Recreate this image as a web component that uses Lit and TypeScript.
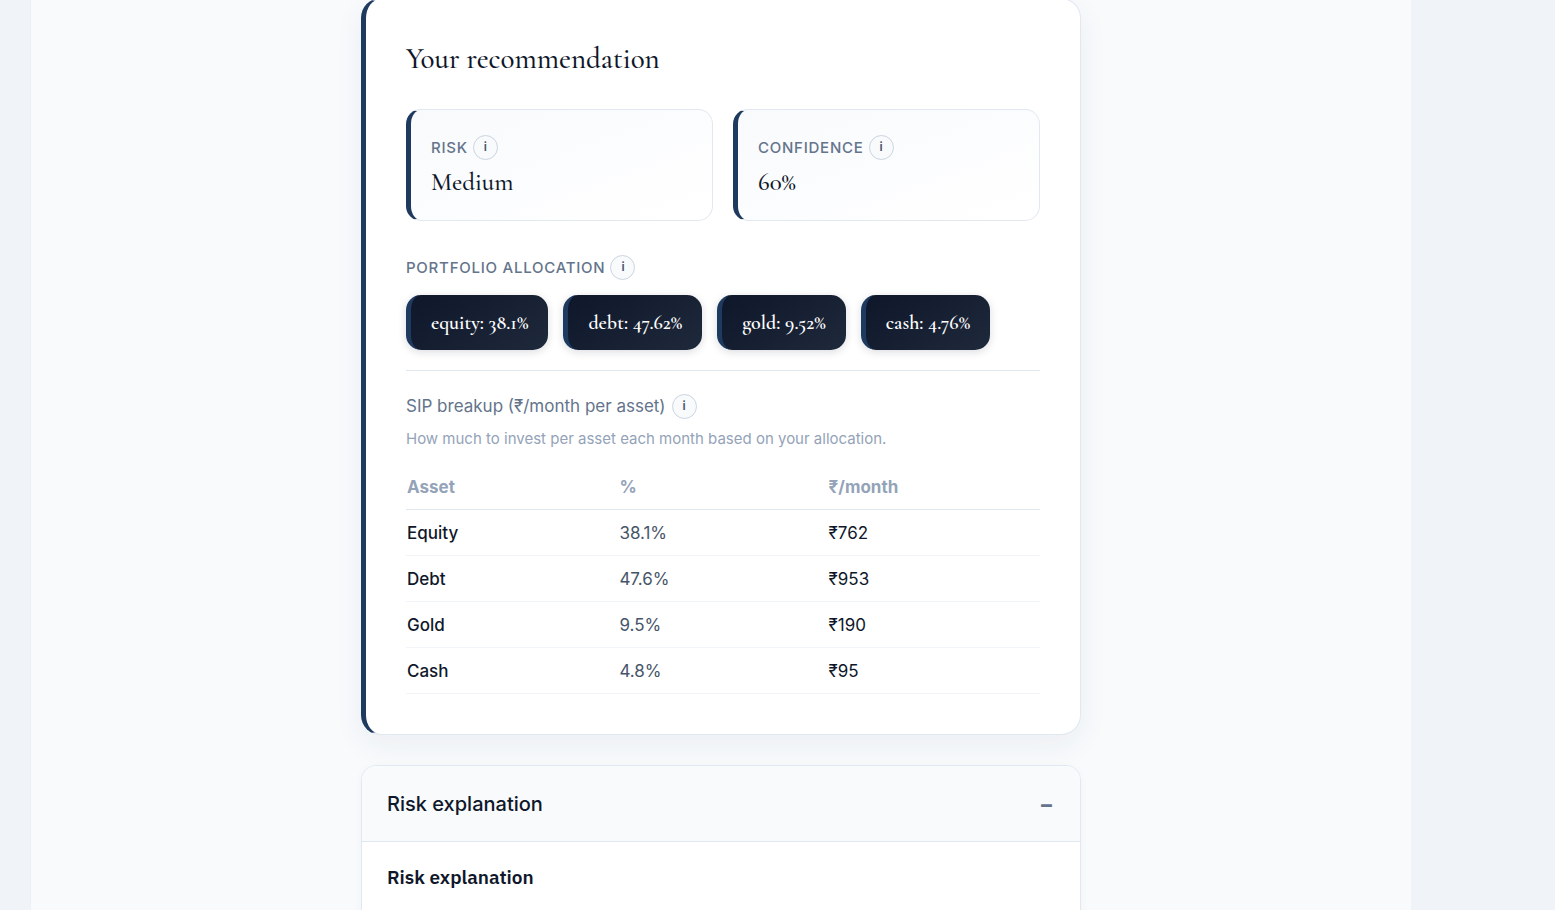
import { LitElement, html, css } from "lit";
import { customElement, property, state } from "lit/decorators.js";

const allocation = [
  { key: "equity", name: "Equity", share: "38.1%", rounded: "38.1%", amount: "₹762" },
  { key: "debt", name: "Debt", share: "47.62%", rounded: "47.6%", amount: "₹953" },
  { key: "gold", name: "Gold", share: "9.52%", rounded: "9.5%", amount: "₹190" },
  { key: "cash", name: "Cash", share: "4.76%", rounded: "4.8%", amount: "₹95" },
];

@customElement("info-button")
class InfoButton extends LitElement {
  @property() topic = "";

  static styles = css`
    :host {
      display: inline-flex;
    }
    .info {
      box-sizing: border-box;
      width: 25px;
      height: 25px;
      padding: 0 0 2px;
      border: 1px solid #cbd5e1;
      border-radius: 50%;
      background: #f8fafc;
      color: #475569;
      font: 600 12px/20px Inter, sans-serif;
      cursor: pointer;
    }
  `;

  render() {
    return html`<button class="info" type="button" aria-label=${"About " + this.topic}>i</button>`;
  }
}

@customElement("app-root")
class AppRoot extends LitElement {
  @state() private open = true;

  static styles = css`
    :host {
      display: block;
      height: 100vh;
      overflow: hidden;
      background: #f0f4f9;
      color: #0f172a;
      font-family: Inter, sans-serif;
    }
    * {
      box-sizing: border-box;
    }
    h2,
    h3,
    p,
    dl,
    dd,
    ul {
      margin: 0;
      padding: 0;
    }
    .page {
      min-height: 110vh;
      margin: -2px 144px 0 30px;
      padding: 0 20px;
      border-left: 1px solid #edf2f7;
      background: #f8fafc;
    }
    .column {
      display: flex;
      flex-direction: column;
      gap: 30px;
      max-width: 720px;
      margin: 0 auto;
    }
    .card {
      padding: 40px;
      border: 1px solid #e2e8f0;
      border-left: 5px solid #1e3a5f;
      border-radius: 20px;
      background: #fff;
      box-shadow: 0 10px 30px rgba(30, 58, 95, 0.06);
    }
    .title {
      margin-bottom: 30px;
      font: 500 29px/40px "Cormorant Garamond", "Liberation Serif", serif;
    }
    .stats {
      display: grid;
      grid-template-columns: 1fr 1fr;
      gap: 20px;
    }
    .stat {
      padding: 25px 20px 20px;
      border: 1px solid #e2e8f0;
      border-left: 5px solid #1e3a5f;
      border-radius: 15px;
      background: linear-gradient(160deg, #f8fafc, #fff);
    }
    .label {
      display: flex;
      align-items: center;
      gap: 5px;
      color: #64748b;
      font-size: 15px;
      font-weight: 500;
      line-height: 25px;
      letter-spacing: 0.05em;
      text-transform: uppercase;
    }
    .value {
      padding-top: 5px;
      font: 500 25px/35px "Cormorant Garamond", "Liberation Serif", serif;
    }
    .allocation {
      margin-top: 34px;
      padding-bottom: 20px;
      border-bottom: 1px solid #e2e8f0;
    }
    .pills {
      display: flex;
      flex-wrap: wrap;
      gap: 15px;
      margin-top: 15px;
      list-style: none;
    }
    .pill {
      padding: 16px 20px 14px;
      border-left: 5px solid #1e3a5f;
      border-radius: 15px;
      background: linear-gradient(145deg, #0f172a, #1e293b);
      box-shadow: 0 2px 8px rgba(15, 23, 42, 0.15);
      color: #fff;
      font: 600 20px/25px "Cormorant Garamond", "Liberation Serif", serif;
    }
    .subtitle {
      display: flex;
      align-items: center;
      gap: 6px;
      margin-top: 23px;
      color: #64748b;
      font-size: 17px;
      font-weight: 400;
      line-height: 25px;
    }
    .hint {
      margin-top: 8px;
      color: #94a3b8;
      font-size: 15px;
      line-height: 24px;
    }
    .table {
      width: 100%;
      margin-top: 13px;
      border-collapse: collapse;
      table-layout: fixed;
      font-size: 17px;
      line-height: 21px;
      text-align: left;
    }
    .table th,
    .table td {
      padding: 13px 1px 11px;
      border-bottom: 1px solid #f1f5f9;
    }
    .table thead th {
      border-bottom-color: #e2e8f0;
      color: #94a3b8;
      font-weight: 700;
    }
    .table tbody th {
      font-weight: 500;
    }
    .share {
      color: #475569;
    }
    .panel {
      overflow: hidden;
      border: 1px solid #e2e8f0;
      border-radius: 15px;
      background: #fff;
      box-shadow: 0 2px 8px rgba(30, 58, 95, 0.04);
    }
    .toggle {
      display: flex;
      align-items: center;
      justify-content: space-between;
      width: 100%;
      padding: 26px 26px 24px 25px;
      border: 0;
      background: #f8fafc;
      color: inherit;
      font: 500 20px/25px Inter, sans-serif;
      text-align: left;
      cursor: pointer;
    }
    .sign {
      color: #64748b;
      font-size: 22px;
      font-weight: 700;
    }
    .body {
      padding: 20px 25px 40px;
      border-top: 1px solid #e2e8f0;
    }
    .heading {
      font: 600 19px/30px "IBM Plex Sans", Roboto, sans-serif;
    }
  `;

  render() {
    return html`
      <main class="page">
        <div class="column">
          <section class="card">
            <h2 class="title">Your recommendation</h2>
            <dl class="stats">
              <div class="stat">
                <dt class="label">Risk <info-button topic="risk"></info-button></dt>
                <dd class="value">Medium</dd>
              </div>
              <div class="stat">
                <dt class="label">Confidence <info-button topic="confidence"></info-button></dt>
                <dd class="value">60%</dd>
              </div>
            </dl>
            <div class="allocation">
              <h3 class="label">
                Portfolio allocation <info-button topic="portfolio allocation"></info-button>
              </h3>
              <ul class="pills">
                ${allocation.map((a) => html`<li class="pill">${a.key}: ${a.share}</li>`)}
              </ul>
            </div>
            <h3 class="subtitle">
              SIP breakup (₹/month per asset) <info-button topic="SIP breakup"></info-button>
            </h3>
            <p class="hint">How much to invest per asset each month based on your allocation.</p>
            <table class="table">
              <colgroup>
                <col style="width: 33.5%" />
                <col style="width: 33%" />
                <col />
              </colgroup>
              <thead>
                <tr>
                  <th scope="col">Asset</th>
                  <th scope="col">%</th>
                  <th scope="col">₹/month</th>
                </tr>
              </thead>
              <tbody>
                ${allocation.map(
                  (a) => html`
                    <tr>
                      <th scope="row">${a.name}</th>
                      <td class="share">${a.rounded}</td>
                      <td>${a.amount}</td>
                    </tr>
                  `
                )}
              </tbody>
            </table>
          </section>
          <section class="panel">
            <button
              class="toggle"
              type="button"
              aria-expanded=${this.open ? "true" : "false"}
              @click=${() => (this.open = !this.open)}
            >
              Risk explanation <span class="sign">${this.open ? "−" : "+"}</span>
            </button>
            ${this.open
              ? html`<div class="body"><h3 class="heading">Risk explanation</h3></div>`
              : null}
          </section>
        </div>
      </main>
    `;
  }
}
